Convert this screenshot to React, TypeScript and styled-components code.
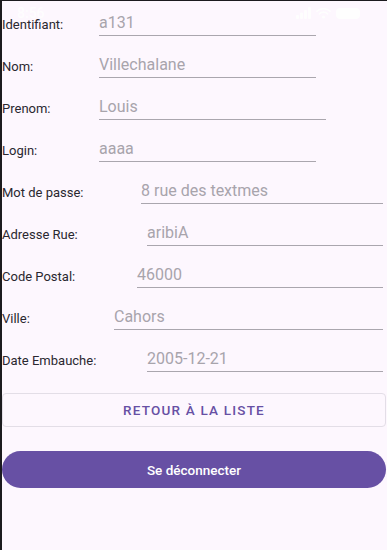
import styled, { createGlobalStyle } from "styled-components";

const GlobalStyle = createGlobalStyle`
    html, body {
        margin: 0;
        padding: 0;
        background: #1c1b1f;
    }
    body {
        font-family: Roboto, "Noto Sans", sans-serif;
    }
`

type Field = {
    label: string;
    value: string;
    offset: number;
    width?: number;
}

const fields: Field[] = [
    { label: "Identifiant:", value: "a131", offset: 97, width: 217 },
    { label: "Nom:", value: "Villechalane", offset: 97, width: 217 },
    { label: "Prenom:", value: "Louis", offset: 97, width: 227 },
    { label: "Login:", value: "aaaa", offset: 97, width: 217 },
    { label: "Mot de passe:", value: "8 rue des textmes", offset: 139 },
    { label: "Adresse Rue:", value: "aribiA", offset: 145 },
    { label: "Code Postal:", value: "46000", offset: 135 },
    { label: "Ville:", value: "Cahors", offset: 112 },
    { label: "Date Embauche:", value: "2005-12-21", offset: 145 },
];

export default function App() {
    return (
        <>
            <GlobalStyle />
            <Screen>
                <StatusBar>
                    <Clock>8:56</Clock>
                    <StatusIcons>
                        <svg width="15" height="12" viewBox="0 0 15 12">
                            <rect x="0" y="8" width="3" height="4" rx="1" fill="#fff" />
                            <rect x="4" y="5.5" width="3" height="6.5" rx="1" fill="#fff" />
                            <rect x="8" y="3" width="3" height="9" rx="1" fill="#fff" />
                            <rect x="12" y="0" width="3" height="12" rx="1" fill="#fff" />
                        </svg>
                        <svg width="15" height="12" viewBox="0 0 15 12">
                            <path d="M1 4.2a9.5 9.5 0 0 1 13 0" stroke="#fff" strokeWidth="1.8" fill="none" strokeLinecap="round" />
                            <path d="M3.4 6.8a6 6 0 0 1 8.2 0" stroke="#fff" strokeWidth="1.8" fill="none" strokeLinecap="round" />
                            <circle cx="7.5" cy="10" r="1.6" fill="#fff" />
                        </svg>
                        <Battery />
                    </StatusIcons>
                </StatusBar>

                <Form>
                    {fields.map((f) => (
                        <Row key={f.label} $offset={f.offset}>
                            <Label>{f.label}</Label>
                            <Input $width={f.width}>{f.value}</Input>
                        </Row>
                    ))}
                </Form>

                <OutlineButton>Retour à la liste</OutlineButton>
                <FilledButton>Se déconnecter</FilledButton>
            </Screen>
        </>
    )
}

const Screen = styled.div`
    position: relative;
    margin: 1px 0 0 2px;
    height: 549px;
    background: #fdf7fe;
    box-sizing: border-box;
    padding-right: 1px;
`

const StatusBar = styled.div`
    position: absolute;
    top: 0;
    left: 0;
    right: 0;
    height: 24px;
    display: flex;
    align-items: center;
    justify-content: space-between;
    padding: 0 27px 0 15px;
    pointer-events: none;
`

const Clock = styled.span`
    color: #fff;
    font-size: 14px;
    font-weight: 500;
    opacity: 0.85;
`

const StatusIcons = styled.div`
    display: flex;
    align-items: center;
    gap: 5px;
    opacity: 0.9;
`

const Battery = styled.span`
    display: block;
    width: 24px;
    height: 11px;
    border-radius: 4px;
    background: #fff;
`

const Form = styled.div`
    display: flex;
    flex-direction: column;
`

const Row = styled.div<{ $offset: number }>`
    display: grid;
    grid-template-columns: ${(p) => p.$offset}px 1fr;
    align-items: start;
    height: 42px;
    padding-right: 3px;
`

const Label = styled.span`
    padding-top: 16px;
    font-size: 13px;
    line-height: 16px;
    color: #2a2830;
    white-space: nowrap;
`

const Input = styled.div<{ $width?: number }>`
    width: ${(p) => (p.$width ? `${p.$width}px` : "auto")};
    margin-top: 12px;
    height: 22px;
    line-height: 20px;
    font-size: 16px;
    color: #a8a4ac;
    border-bottom: 1px solid #aaa6ae;
`

const OutlineButton = styled.button`
    display: block;
    width: 384px;
    height: 34px;
    margin-top: 14px;
    background: transparent;
    border: 1px solid #e3dee7;
    border-radius: 4px;
    font-family: Roboto, sans-serif;
    font-size: 13.5px;
    font-weight: 500;
    letter-spacing: 1.2px;
    text-transform: uppercase;
    color: #6750a4;
`

const FilledButton = styled.button`
    display: block;
    width: 384px;
    height: 37px;
    margin-top: 24px;
    background: #6750a4;
    border: none;
    border-radius: 19px;
    font-family: Roboto, sans-serif;
    font-size: 13.5px;
    font-weight: 500;
    color: #fff;
`
